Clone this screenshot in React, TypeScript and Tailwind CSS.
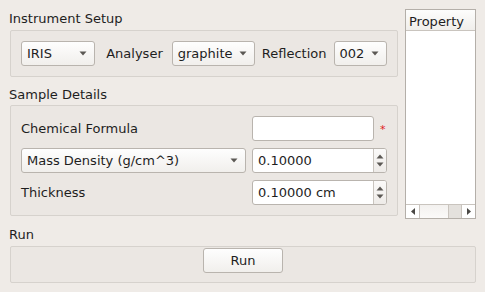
import React from "react";

const Arrow = () => (
  <svg width="8" height="5" viewBox="0 0 8 5" className="shrink-0">
    <path d="M0.5 0.5 L7.5 0.5 L4 4.5 Z" fill="#5b5854" />
  </svg>
);

// fusion style drop down
const Combo = ({ label, className }: { label: string; className: string }) => (
  <div
    className={`flex h-[25px] items-center justify-between rounded-[3px] border border-[#b9b4ae] bg-linear-to-b from-[#fefefe] to-[#f1efec] pl-[5px] pr-[7px] ${className}`}
  >
    <span>{label}</span>
    <Arrow />
  </div>
);

const Spin = ({ value }: { value: string }) => (
  <div className="flex h-[25px] w-[135px] overflow-hidden rounded-[3px] border border-[#b9b4ae] bg-white">
    <span className="flex flex-1 items-center pl-[5px]">{value}</span>
    <div className="flex w-[13px] flex-col items-center justify-center gap-[3px] border-l border-[#c9c4be] bg-linear-to-b from-[#fbfaf9] to-[#eeebe8]">
      <svg width="8" height="5" viewBox="0 0 8 5">
        <path d="M0.5 4.5 L7.5 4.5 L4 0.5 Z" fill="#5b5854" />
      </svg>
      <svg width="8" height="5" viewBox="0 0 8 5">
        <path d="M0.5 0.5 L7.5 0.5 L4 4.5 Z" fill="#5b5854" />
      </svg>
    </div>
  </div>
);

export default function App() {
  return (
    <div className="h-[292px] w-[485px] overflow-hidden bg-[#efebe7] pl-[9px] pt-[9px] font-['DejaVu_Sans',sans-serif] text-[13px] leading-[15px] text-[#1e1e1e]">
      <div className="flex h-[210px] gap-[7px]">
        <div className="flex w-[389px] flex-col">
          <div className="h-[21px] pt-[2px]">Instrument Setup</div>
          <div className="ml-[1px] flex h-[47px] items-center rounded-[2px] border border-[#d6d2cd] bg-[#ebe7e3] px-[10px]">
            <Combo label="IRIS" className="w-[75px]" />
            <span className="ml-[11px] mr-[9px]">Analyser</span>
            <Combo label="graphite" className="w-[84px]" />
            <span className="ml-[7px] mr-[7px]">Reflection</span>
            <Combo label="002" className="w-[54px]" />
          </div>
          <div className="h-[28px] pt-[10px]">Sample Details</div>
          <div className="ml-[1px] h-[111px] rounded-[2px] border border-[#d6d2cd] bg-[#ebe7e3] pl-[10px] pt-[10px]">
            <div className="grid grid-cols-[225px_135px] grid-rows-[25px_25px_25px] gap-x-[6px] gap-y-[7px]">
              <span className="flex items-center">Chemical Formula</span>
              <div className="flex items-center">
                <div className="h-[25px] w-[122px] rounded-[3px] border border-[#b9b4ae] bg-white" />
                <span className="ml-[6px] mt-[1px] text-[11px] text-[#e0201b]">*</span>
              </div>
              <Combo label="Mass Density (g/cm^3)" className="w-[225px]" />
              <Spin value="0.10000" />
              <span className="flex items-center">Thickness</span>
              <Spin value="0.10000 cm" />
            </div>
          </div>
        </div>
        <div className="flex w-[71px] flex-col border border-[#b4afa9] bg-white">
          <div className="h-[21px] border-b border-[#c9c4be] bg-linear-to-b from-[#fdfdfc] to-[#f0eeeb] pl-[3px] pt-[4px]">
            Property
          </div>
          <div className="flex-1" />
          <div className="flex h-[14px] border-t border-[#c9c4be] bg-linear-to-b from-[#f3f1ef] to-[#fbfaf9]">
            <div className="flex w-[14px] items-center justify-center border-r border-[#c9c4be] bg-white">
              <svg width="4" height="7" viewBox="0 0 4 7">
                <path d="M4 0 L4 7 L0 3.5 Z" fill="#4a4845" />
              </svg>
            </div>
            <div className="flex-1" />
            <div className="w-[14px] border-x border-[#c9c4be] bg-[#e4e1dd]" />
            <div className="flex w-[13px] items-center justify-center bg-white">
              <svg width="4" height="7" viewBox="0 0 4 7">
                <path d="M0 0 L0 7 L4 3.5 Z" fill="#4a4845" />
              </svg>
            </div>
          </div>
        </div>
      </div>
      <div className="w-[467px]">
        <div className="h-[27px] pt-[8px]">Run</div>
        <div className="ml-[1px] flex h-[37px] justify-center rounded-[2px] border border-[#d6d2cd] bg-[#ebe7e3] pt-[1px]">
          <div className="flex h-[25px] w-[80px] items-center justify-center rounded-[3px] border border-[#b9b4ae] bg-linear-to-b from-[#fefefe] to-[#f1efec]">
            Run
          </div>
        </div>
      </div>
    </div>
  );
}
